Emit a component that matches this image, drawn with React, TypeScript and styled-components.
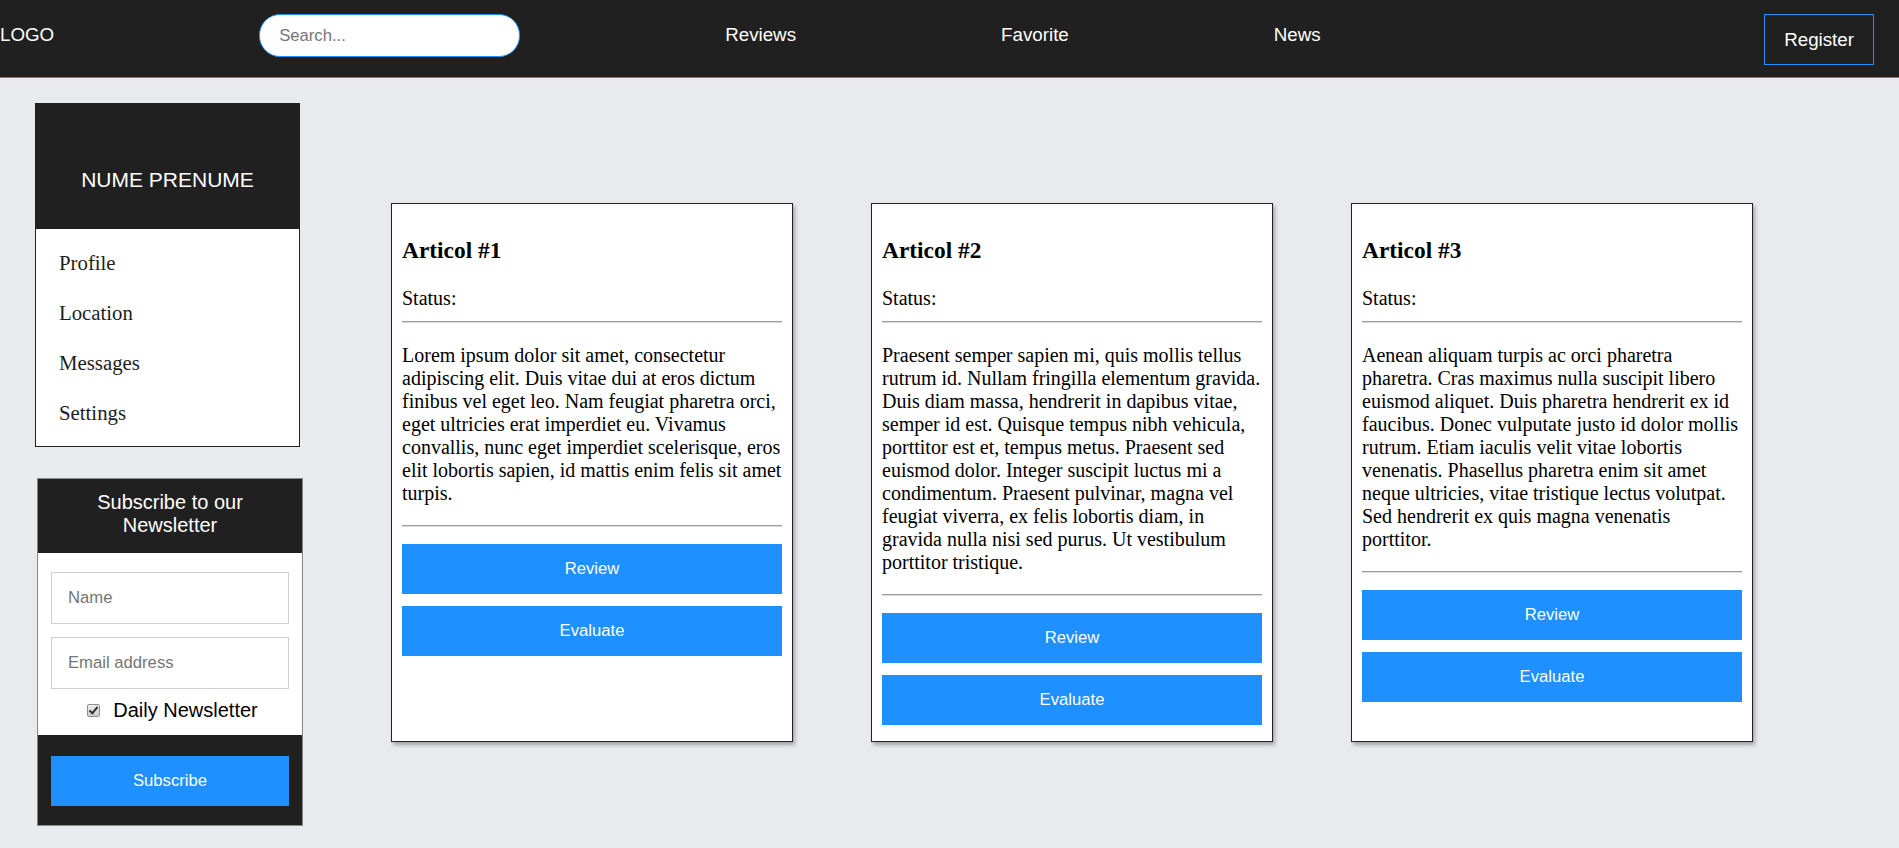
import React from "react";
import styled, { createGlobalStyle } from "styled-components";

const GlobalStyle = createGlobalStyle`
  html, body {
    margin: 0;
    background: #e9eaee;
  }
  body {
    font-family: "Liberation Serif", "Times New Roman", serif;
    color: #000;
  }
`;

const TopBar = styled.header`
  display: flex;
  align-items: flex-start;
  gap: 205px;
  height: 63px;
  padding: 14px 25px 0 0;
  background: #202020;
  border-bottom: 1px solid #2f8ee5;
  font-family: "Liberation Sans", Arial, sans-serif;
`;

const Logo = styled.div`
  padding: 10px 0;
  font-size: 18.75px;
  color: #fff;
`;

const SearchInput = styled.input`
  width: 261px;
  height: 43px;
  box-sizing: border-box;
  border: 1px solid #1e90ff;
  border-radius: 21px;
  padding: 0 19px;
  font-family: "Liberation Sans", Arial, sans-serif;
  font-size: 16.67px;
  outline: none;

  &::placeholder {
    color: #757575;
  }
`;

const NavLink = styled.a`
  padding: 10px 0;
  font-size: 18.75px;
  color: #fff;
  text-decoration: none;
`;

const RegisterButton = styled.button`
  margin-left: auto;
  height: 51px;
  padding: 0 19px;
  background: transparent;
  border: 1px solid #1e90ff;
  color: #fff;
  font-family: "Liberation Sans", Arial, sans-serif;
  font-size: 18.75px;
`;

const Page = styled.main`
  display: flex;
  align-items: flex-start;
  padding: 25px 0 22px 35px;
`;

const Sidebar = styled.aside`
  width: 268px;
  display: flex;
  flex-direction: column;
  align-items: flex-start;
  gap: 31px;
`;

const ProfileCard = styled.div`
  width: 265px;
  box-sizing: border-box;
  border: 1px solid #202020;
  background: #fff;
`;

const ProfileHeader = styled.div`
  padding: 64px 0 37px;
  background: #202020;
  color: #fff;
  text-align: center;
  font-family: "Liberation Sans", Arial, sans-serif;
  font-size: 21px;
  line-height: 24px;
`;

const Menu = styled.ul`
  list-style: none;
  margin: 0;
  padding: 9px 0 8px 23px;
`;

const MenuItem = styled.li`
  height: 50px;
  line-height: 50px;
  font-size: 20.8px;
  color: #1e1e1e;
`;

const NewsletterCard = styled.form`
  width: 266px;
  margin-left: 2px;
  box-sizing: border-box;
  border: 1px solid #8a8a8a;
  font-family: "Liberation Sans", Arial, sans-serif;
`;

const NewsletterHeader = styled.div`
  padding: 12px 20px 16px;
  background: #202020;
  color: #fff;
  text-align: center;
  font-size: 20px;
  line-height: 23px;
`;

const NewsletterBody = styled.div`
  padding: 19px 13px 4px;
  background: #fff;
`;

const Field = styled.input`
  display: block;
  width: 100%;
  height: 52px;
  box-sizing: border-box;
  border: 1px solid #cfcfcf;
  padding: 0 16px;
  font-family: "Liberation Sans", Arial, sans-serif;
  font-size: 16.67px;
  outline: none;

  & + & {
    margin-top: 13px;
  }

  &::placeholder {
    color: #757575;
  }
`;

const CheckRow = styled.label`
  display: flex;
  justify-content: center;
  align-items: center;
  gap: 13px;
  height: 42px;
  padding-left: 5px;
  font-size: 20px;
  color: #000;
`;

const CheckBox = styled.input`
  appearance: none;
  position: relative;
  width: 13px;
  height: 13px;
  margin: 0;
  border: 1px solid #8f8f8f;
  border-radius: 2px;
  background: linear-gradient(#ececec, #cfcfcf);

  &:checked::after {
    content: "";
    position: absolute;
    left: 3px;
    top: 0px;
    width: 3px;
    height: 7px;
    border: solid #333;
    border-width: 0 2px 2px 0;
    transform: rotate(40deg);
  }
`;

const NewsletterFooter = styled.div`
  padding: 21px 13px 19px;
  background: #202020;
`;

const BlueButton = styled.button`
  display: block;
  width: 100%;
  height: 50px;
  border: none;
  background: #1e90ff;
  color: #fff;
  font-family: "Liberation Sans", Arial, sans-serif;
  font-size: 16.67px;
`;

const Articles = styled.section`
  display: flex;
  align-items: stretch;
  gap: 78px;
  margin: 100px 0 0 88px;
`;

const ArticleCard = styled.article`
  width: 402px;
  box-sizing: border-box;
  display: flex;
  flex-direction: column;
  padding: 10px;
  background: #fff;
  border: 1px solid #222;
  box-shadow: 2px 3px 4px rgba(0, 0, 0, 0.3);
`;

const ArticleTitle = styled.h3`
  margin: 23px 0;
  font-size: 23.4px;
  line-height: 27px;
  font-weight: bold;
`;

const Status = styled.div`
  margin-bottom: 11px;
  font-size: 20px;
  line-height: 23px;
`;

const Divider = styled.hr`
  margin: 0;
  height: 0;
  border: none;
  border-top: 1px solid #9c9c9c;
  border-bottom: 1px solid #dcdcdc;
`;

const ArticleText = styled.p`
  margin: 21px 0 20px;
  font-size: 20px;
  line-height: 23px;
`;

const ButtonStack = styled.div`
  display: flex;
  flex-direction: column;
  gap: 12px;
  margin: 17px 0 6px;
`;

const articles = [
  {
    id: 1,
    text: "Lorem ipsum dolor sit amet, consectetur adipiscing elit. Duis vitae dui at eros dictum finibus vel eget leo. Nam feugiat pharetra orci, eget ultricies erat imperdiet eu. Vivamus convallis, nunc eget imperdiet scelerisque, eros elit lobortis sapien, id mattis enim felis sit amet turpis.",
  },
  {
    id: 2,
    text: "Praesent semper sapien mi, quis mollis tellus rutrum id. Nullam fringilla elementum gravida. Duis diam massa, hendrerit in dapibus vitae, semper id est. Quisque tempus nibh vehicula, porttitor est et, tempus metus. Praesent sed euismod dolor. Integer suscipit luctus mi a condimentum. Praesent pulvinar, magna vel feugiat viverra, ex felis lobortis diam, in gravida nulla nisi sed purus. Ut vestibulum porttitor tristique.",
  },
  {
    id: 3,
    text: "Aenean aliquam turpis ac orci pharetra pharetra. Cras maximus nulla suscipit libero euismod aliquet. Duis pharetra hendrerit ex id faucibus. Donec vulputate justo id dolor mollis rutrum. Etiam iaculis velit vitae lobortis venenatis. Phasellus pharetra enim sit amet neque ultricies, vitae tristique lectus volutpat. Sed hendrerit ex quis magna venenatis porttitor.",
  },
];

const menu = ["Profile", "Location", "Messages", "Settings"];

const App = () => {
  return (
    <>
      <GlobalStyle />
      <TopBar>
        <Logo>LOGO</Logo>
        <SearchInput type="text" placeholder="Search..." />
        <NavLink href="#">Reviews</NavLink>
        <NavLink href="#">Favorite</NavLink>
        <NavLink href="#">News</NavLink>
        <RegisterButton>Register</RegisterButton>
      </TopBar>
      <Page>
        <Sidebar>
          <ProfileCard>
            <ProfileHeader>NUME PRENUME</ProfileHeader>
            <Menu>
              {menu.map((item) => (
                <MenuItem key={item}>{item}</MenuItem>
              ))}
            </Menu>
          </ProfileCard>
          <NewsletterCard onSubmit={(e) => e.preventDefault()}>
            <NewsletterHeader>Subscribe to our Newsletter</NewsletterHeader>
            <NewsletterBody>
              <Field type="text" placeholder="Name" />
              <Field type="email" placeholder="Email address" />
              <CheckRow>
                <CheckBox type="checkbox" defaultChecked />
                Daily Newsletter
              </CheckRow>
            </NewsletterBody>
            <NewsletterFooter>
              <BlueButton type="submit">Subscribe</BlueButton>
            </NewsletterFooter>
          </NewsletterCard>
        </Sidebar>
        <Articles>
          {articles.map((article) => (
            <ArticleCard key={article.id}>
              <ArticleTitle>Articol #{article.id}</ArticleTitle>
              <Status>Status:</Status>
              <Divider />
              <ArticleText>{article.text}</ArticleText>
              <Divider />
              <ButtonStack>
                <BlueButton>Review</BlueButton>
                <BlueButton>Evaluate</BlueButton>
              </ButtonStack>
            </ArticleCard>
          ))}
        </Articles>
      </Page>
    </>
  );
};

export default App;
